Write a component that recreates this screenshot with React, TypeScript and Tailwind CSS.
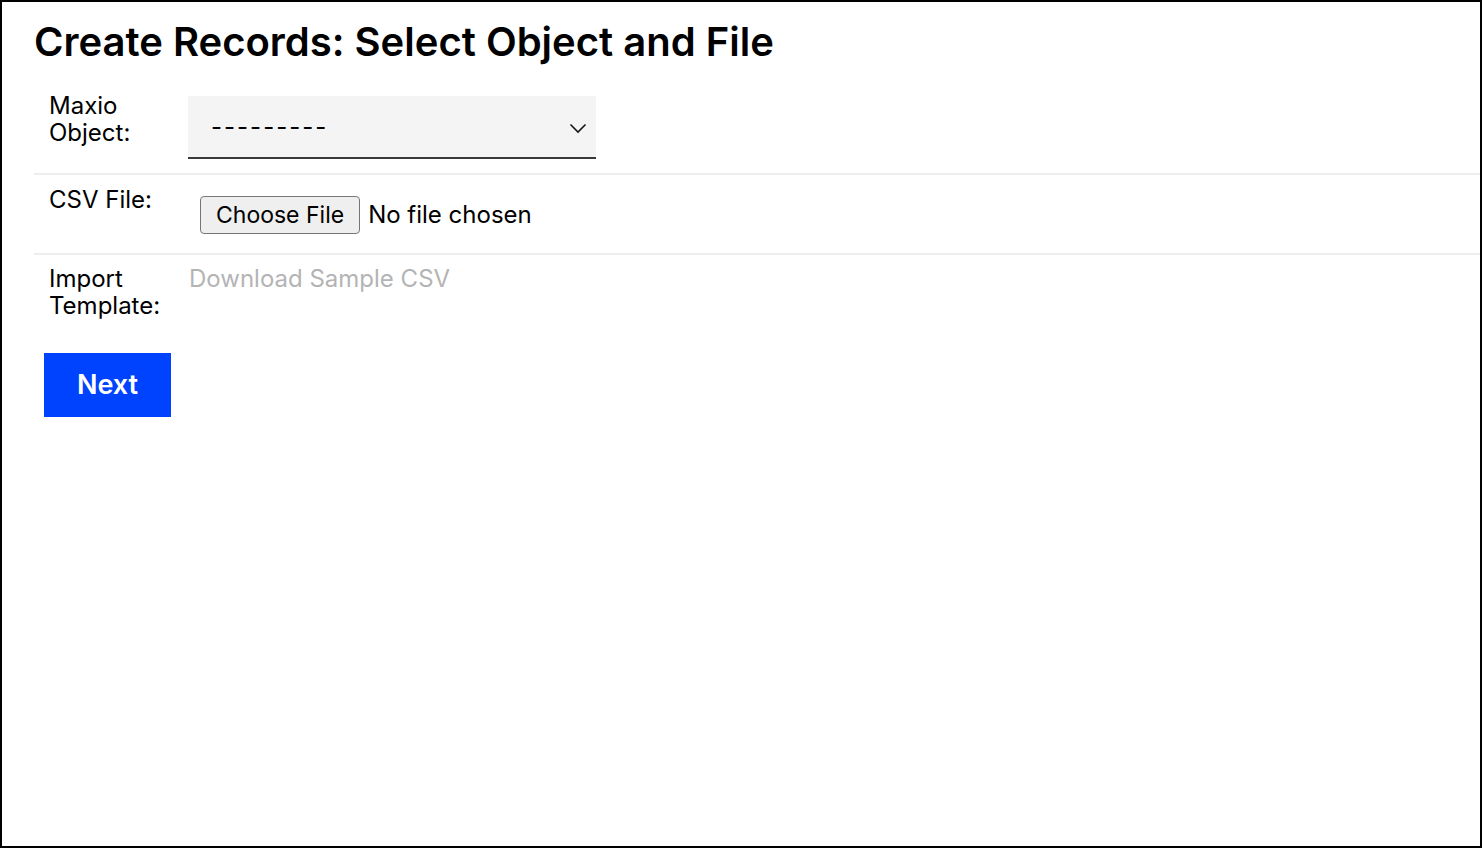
import React from 'react';

const font = { fontFamily: 'Inter, "Liberation Sans", sans-serif' };

export default function App() {
  return (
    <div style={font} className="h-[848px] w-full border-2 border-black bg-white pl-[32px] text-black">
      <h1 className="pt-[16px] pb-[16px] text-[40px] leading-[48px] font-semibold">
        Create Records: Select Object and File
      </h1>

      <div className="grid grid-cols-[154px_1fr] text-[24px] leading-[27px]">
        {/* Maxio Object */}
        <div className="border-b-2 border-[#eeeeee] pt-[10px] pl-[15px]">
          Maxio
          <br />
          Object:
        </div>
        <div className="border-b-2 border-[#eeeeee] py-[14px]">
          <div className="relative w-[408px]">
            <select className="h-[63px] w-full appearance-none border-b-2 border-[#393939] bg-[#f4f4f4] pl-[23px] text-[24px] tracking-[2px] outline-none">
              <option>---------</option>
            </select>
            <svg
              className="pointer-events-none absolute top-[26px] right-[9px]"
              width="18"
              height="12"
              viewBox="0 0 18 12"
              fill="none"
              stroke="#161616"
              strokeWidth="1.6"
            >
              <path d="M1.5 2.5 L9 10 L16.5 2.5" />
            </svg>
          </div>
        </div>

        {/* CSV File */}
        <div className="border-b-2 border-[#eeeeee] pt-[11px] pl-[15px]">CSV File:</div>
        <div className="border-b-2 border-[#eeeeee] pt-[21px] pb-[19px] pl-[12px]">
          <input
            type="file"
            accept=".csv"
            className="text-[24px] leading-[28px] file:mr-[8px] file:rounded-[4px] file:border file:border-[#767676] file:bg-[#efefef] file:px-[15px] file:py-[4px] file:text-[23px] file:text-black"
          />
        </div>

        {/* Import Template */}
        <div className="pt-[10px] pl-[15px]">
          Import
          <br />
          Template:
        </div>
        <div className="pt-[10px]">
          <a className="pl-[1px] text-[#b4b4b4]">Download Sample CSV</a>
        </div>
      </div>

      <button className="mt-[34px] ml-[10px] h-[64px] w-[127px] bg-[#0043ff] text-[27px] font-semibold text-white">
        Next
      </button>
    </div>
  );
}
